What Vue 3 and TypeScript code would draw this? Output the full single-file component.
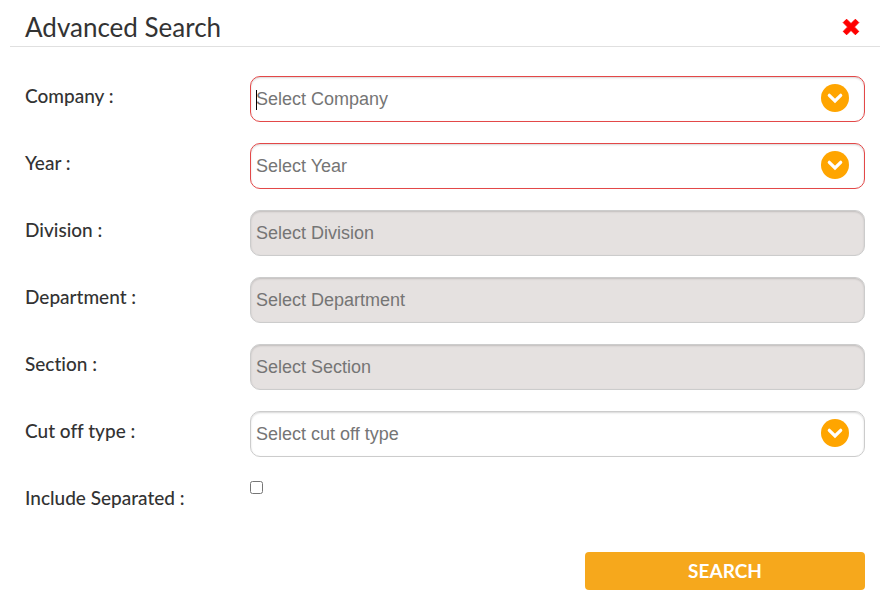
<script setup lang="ts">
import { reactive, ref } from 'vue'

interface Field {
  id: string
  label: string
  placeholder: string
  required?: boolean
  disabled?: boolean
  active?: boolean
}

const fields: Field[] = [
  { id: 'company', label: 'Company :', placeholder: 'Select Company', required: true, active: true },
  { id: 'year', label: 'Year :', placeholder: 'Select Year', required: true },
  { id: 'division', label: 'Division :', placeholder: 'Select Division', disabled: true },
  { id: 'department', label: 'Department :', placeholder: 'Select Department', disabled: true },
  { id: 'section', label: 'Section :', placeholder: 'Select Section', disabled: true },
  { id: 'cutoff', label: 'Cut off type :', placeholder: 'Select cut off type' },
]

const values = reactive<Record<string, string>>({})
const includeSeparated = ref(false)
</script>

<template>
  <main class="dialog">
    <header class="header">
      <h1 class="title">Advanced Search</h1>
      <button class="close" type="button" aria-label="Close">
        <svg viewBox="0 0 18 18" width="18" height="18" aria-hidden="true">
          <path
            d="M4.6 1.2 9 5.6 13.4 1.2 16.8 4.6 12.4 9 16.8 13.4 13.4 16.8 9 12.4 4.6 16.8 1.2 13.4 5.6 9 1.2 4.6Z"
            fill="#ff0000"
            stroke="#ff0000"
            stroke-width="1"
            stroke-linejoin="round"
          />
        </svg>
      </button>
    </header>

    <form class="form" @submit.prevent>
      <div v-for="f in fields" :key="f.id" class="row">
        <label class="label" :for="f.id">{{ f.label }}</label>
        <div class="control">
          <input
            :id="f.id"
            v-model="values[f.id]"
            class="input"
            :class="{ invalid: f.required }"
            type="text"
            autocomplete="off"
            :placeholder="f.placeholder"
            :disabled="f.disabled"
          />
          <span v-if="f.active && !values[f.id]" class="caret" />
          <button v-if="!f.disabled" class="toggle" type="button" :aria-label="f.placeholder">
            <svg viewBox="0 0 28 28" width="28" height="28" aria-hidden="true">
              <circle cx="14" cy="14" r="14" fill="#ffa500" />
              <path
                d="M8.3 11.3 14 17 19.7 11.3"
                fill="none"
                stroke="#fff"
                stroke-width="3.2"
                stroke-linecap="round"
              />
            </svg>
          </button>
        </div>
      </div>

      <div class="row">
        <label class="label" for="separated">Include Separated :</label>
        <input id="separated" v-model="includeSeparated" class="check" type="checkbox" />
      </div>

      <button class="search" type="submit">SEARCH</button>
    </form>
  </main>
</template>

<style>
body {
  margin: 0;
  background: #fff;
}
</style>

<style scoped>
.dialog {
  padding: 10px 6px 24px 10px;
  color: #333;
  font-family: Lato, "Liberation Sans", sans-serif;
  font-variant-ligatures: none;
}

.header {
  display: flex;
  align-items: flex-start;
  justify-content: space-between;
  height: 36px;
  padding: 0 20px 0 15px;
  border-bottom: 1px solid #e0e0e0;
}

.title {
  margin: 0;
  font-size: 26px;
  font-weight: 400;
  line-height: 34px;
}

.close,
.toggle {
  display: block;
  padding: 0;
  border: 0;
  background: none;
  cursor: pointer;
}

.close {
  padding-top: 8px;
}

.close svg,
.toggle svg {
  display: block;
}

.form {
  display: flex;
  flex-direction: column;
  gap: 21px;
  padding: 29px 15px 0;
}

.row {
  display: grid;
  grid-template-columns: 225px 1fr;
  align-items: start;
  min-height: 46px;
}

.label {
  font-size: 19px;
  font-weight: 500;
  line-height: 40px;
}

.control {
  position: relative;
}

.input {
  display: block;
  box-sizing: border-box;
  width: 100%;
  height: 46px;
  padding: 0 50px 0 5px;
  border: 1px solid #ccc;
  border-radius: 10px;
  outline: 0;
  background: #fff;
  box-shadow: inset 0 1px 2px rgba(0, 0, 0, 0.16);
  color: #555;
  font-family: "Liberation Sans", Arial, sans-serif;
  font-size: 18px;
}

.input::placeholder {
  color: #757575;
  opacity: 1;
}

.input.invalid {
  border-color: #e34848;
}

.input:disabled {
  background: #e5e1e0;
}

.caret {
  position: absolute;
  top: 14px;
  left: 6px;
  width: 1px;
  height: 20px;
  background: #000;
}

.toggle {
  position: absolute;
  top: 8px;
  right: 16px;
}

.check {
  width: 13px;
  height: 13px;
  margin: 3px 0 0;
}

.search {
  align-self: flex-end;
  width: 280px;
  height: 38px;
  margin-top: 7px;
  padding: 0 0 2px;
  border: 0;
  border-radius: 4px;
  background: #f6a81c;
  color: #fff;
  font-family: inherit;
  font-size: 19px;
  font-weight: 700;
  cursor: pointer;
}
</style>
